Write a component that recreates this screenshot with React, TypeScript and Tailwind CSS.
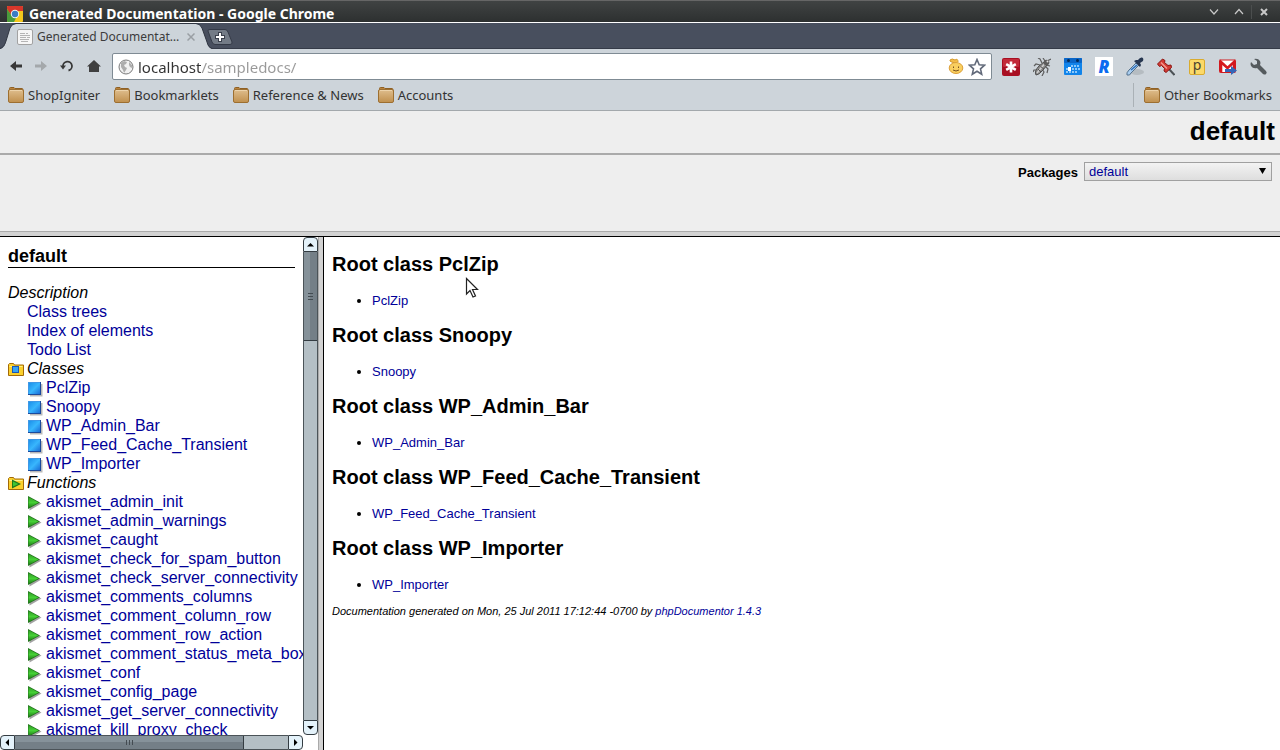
import React from 'react';

const classes = ['PclZip', 'Snoopy', 'WP_Admin_Bar', 'WP_Feed_Cache_Transient', 'WP_Importer'];

const functions = [
  'akismet_admin_init',
  'akismet_admin_warnings',
  'akismet_caught',
  'akismet_check_for_spam_button',
  'akismet_check_server_connectivity',
  'akismet_comments_columns',
  'akismet_comment_column_row',
  'akismet_comment_row_action',
  'akismet_comment_status_meta_box',
  'akismet_conf',
  'akismet_config_page',
  'akismet_get_server_connectivity',
  'akismet_kill_proxy_check',
];

function ChromeLogo() {
  return (
    <svg width="16" height="16" viewBox="0 0 16 16" className="shrink-0">
      <rect width="16" height="16" rx="1" fill="#f3c71c" />
      <path d="M0 1Q0 0 1 0H15Q16 0 16 1V5H8L4 9L0 3Z" fill="#d8372b" />
      <path d="M0 3L5 10L9 12L7 16H1Q0 16 0 15Z" fill="#4a9a3c" />
      <circle cx="8" cy="8" r="4.200" fill="#f4f4f4" />
      <circle cx="8" cy="8" r="3.200" fill="#3c7cc4" />
    </svg>
  );
}

function PageIcon() {
  return (
    <svg width="16" height="16" viewBox="0 0 16 16" className="shrink-0">
      <rect x="0.5" y="0.5" width="15" height="15" rx="1.5" fill="#f6f6f6" stroke="#a2a2a2" />
      <path d="M3 4.5H8M9 4.5H11M3 6.5H13M3 8.5H9M10 8.5H13M3 10.5H12M4 12.5H11" stroke="#b4b4b4" />
    </svg>
  );
}

function BookmarkFolder() {
  return (
    <svg width="16" height="16" viewBox="0 0 16 16" className="shrink-0">
      <defs>
        <linearGradient id="tan" x1="0" y1="0" x2="0" y2="1">
          <stop offset="0" stopColor="#dfbe8e" />
          <stop offset="1" stopColor="#c0904e" />
        </linearGradient>
      </defs>
      <path d="M1.5 4V1.5Q1.5 0.5 2.5 0.5H6L7 1.5H14Q15 1.5 15 3V5H1.5Z" fill="#b9823c" stroke="#8f6024" />
      <rect x="0.5" y="2.5" width="15" height="13" rx="1.5" fill="url(#tan)" stroke="#9d6f30" />
      <path d="M2 3.5H14" stroke="#ecd3ab" />
    </svg>
  );
}

function ClassSquare() {
  return (
    <svg width="16" height="16" viewBox="0 0 16 16" className="shrink-0">
      <defs>
        <linearGradient id="blue" x1="0" y1="0" x2="1" y2="1">
          <stop offset="0" stopColor="#1c90ea" />
          <stop offset="0.5" stopColor="#38b6fd" />
          <stop offset="1" stopColor="#1a6fd8" />
        </linearGradient>
      </defs>
      <path d="M3 3H15.5V15.5H3Z" fill="#8a8a8a" opacity="0.6" />
      <rect x="1" y="1" width="13" height="13" fill="#1b4a9c" />
      <rect x="1" y="1" width="12" height="12" fill="#3f98e6" />
      <rect x="2" y="2" width="11" height="11" fill="url(#blue)" />
    </svg>
  );
}

function FunctionTriangle() {
  return (
    <svg width="16" height="16" viewBox="0 0 16 16" className="shrink-0">
      <defs>
        <linearGradient id="green" x1="0" y1="0" x2="0" y2="1">
          <stop offset="0" stopColor="#2f9a26" />
          <stop offset="0.5" stopColor="#45d035" />
          <stop offset="1" stopColor="#1e7a18" />
        </linearGradient>
      </defs>
      <path d="M2.500 3L14.500 8.500L2.500 15.500Z" fill="#666" opacity="0.6" />
      <path d="M1 1L13 7.500L1 14Z" fill="#22701c" />
      <path d="M1.500 2L11.500 7.500L1.500 13Z" fill="url(#green)" />
    </svg>
  );
}

function TreeFolder({ kind }: { kind: 'class' | 'function' }) {
  return (
    <svg width="16" height="16" viewBox="0 0 16 16" className="shrink-0">
      <path d="M0.5 13.5V2.5L1.5 1.5H5.5L6.5 3H15.5V13.5Z" fill="#fbd02c" stroke="#a26a08" />
      <path d="M1.5 4.5H14.5" stroke="#fdf08a" />
      {kind === 'class' ? (
        <>
          <rect x="4" y="4" width="7" height="7" fill="#1c56b4" />
          <rect x="5" y="5" width="5" height="5" fill="#36a4f6" />
        </>
      ) : (
        <>
          <path d="M4 3.5L13 8L4 12.5Z" fill="#1f7a1c" />
          <path d="M5 5.5L10.5 8L5 10.5Z" fill="#42c433" />
        </>
      )}
    </svg>
  );
}

function Bookmark({ label }: { label: string }) {
  return (
    <a href="#" className="flex items-center gap-1 text-[13px] leading-4 whitespace-nowrap text-[#333]">
      <BookmarkFolder />
      {label}
    </a>
  );
}

function TitleBar() {
  return (
    <header className="flex h-[23px] shrink-0 items-center border-t border-b border-t-[#666] border-b-white bg-linear-to-b from-[#404343] to-[#2d3030] pt-1 pr-1 pl-[7px]">
      <ChromeLogo />
      <h1 className="ml-1.5 flex-1 truncate text-[14px] leading-5 font-bold text-white">Generated Documentation - Google Chrome</h1>
      <div className="flex h-5 items-center pb-1">
        <button aria-label="Minimize" className="flex w-[25px] justify-center">
          <svg width="10" height="10" viewBox="0 0 10 10" fill="none" stroke="#c8c8c8" strokeWidth="1.2"><path d="M1 2.5L5 7L9 2.5" /></svg>
        </button>
        <button aria-label="Maximize" className="flex w-[25px] justify-center">
          <svg width="10" height="10" viewBox="0 0 10 10" fill="none" stroke="#c8c8c8" strokeWidth="1.2"><path d="M1 7L5 2.5L9 7" /></svg>
        </button>
        <button aria-label="Close window" className="flex w-[25px] justify-center border-l border-[#4b4e4e] py-0.5">
          <svg width="10" height="10" viewBox="0 0 10 10" fill="none" stroke="#c8c8c8" strokeWidth="2"><path d="M2 2L8 8M8 2L2 8" /></svg>
        </button>
      </div>
    </header>
  );
}

function PageTab() {
  return (
    <div className="relative flex items-center pt-0.5">
      <PageIcon />
      <span className="ml-1 w-[146px] text-[12px] leading-4 whitespace-nowrap text-[#3c3c3c]">Generated Documentat…</span>
      <button aria-label="Close tab" className="ml-1">
        <svg width="8" height="8" viewBox="0 0 8 8" stroke="#9a9fa4" strokeWidth="1.5"><path d="M0.500 0.500L7.500 7.500M7.500 0.500L0.500 7.500" /></svg>
      </button>
    </div>
  );
}

function TabStrip() {
  return (
    <nav className="flex h-[26px] shrink-0 items-end border-b border-[#353b48] bg-[#484f5e]">
      <div className="relative flex h-[25px] w-[207px] items-center pl-[17px]">
        <svg className="absolute top-0 left-0" width="212" height="26" viewBox="0 0 212 26">
          <path d="M0 26C4 25 5 22 6 18L10 5Q12 1 16 1H196Q200 1 202 5L207 19C208 23 209 25 212 26Z" fill="#cdd4da" />
          <path d="M0 25.5C4 24 5 21 6 18L10 5Q12 0.5 16 0.5H196Q200 0.5 202 5L207 19C208 23 209 24 212 25.5" fill="none" stroke="#2f3541" />
        </svg>
        <PageTab />
      </div>
      <button aria-label="New tab" className="mb-[3px] flex">
        <svg width="26" height="16" viewBox="0 0 26 16">
          <path d="M1 2Q0.5 0.5 3 0.5H18Q20 0.5 21 3L25 13Q25.500 15.500 23 15.500H8Q6 15.500 5 13Z" fill="#737b86" stroke="#343a47" />
          <path d="M13 3V13M8 8H18" stroke="#3a404c" strokeWidth="4" />
          <path d="M13 4V12M9 8H17" stroke="#fff" strokeWidth="2" />
        </svg>
      </button>
    </nav>
  );
}

function Extensions() {
  return (
    <div className="flex items-center gap-[13px] pl-2.5">
      <button aria-label="LastPass">
        <svg width="18" height="18" viewBox="0 0 18 18">
          <rect width="18" height="18" rx="2" fill="#a80f22" />
          <rect x="1" y="1" width="16" height="8" rx="1" fill="#c22a39" />
          <path d="M9 3.500V14.500M4.200 6.200L13.800 11.800M13.800 6.200L4.200 11.800" stroke="#fff" strokeWidth="2.600" />
        </svg>
      </button>
      <button aria-label="Firebug">
        <svg width="18" height="18" viewBox="0 0 18 18" fill="none">
          <path d="M7 7L3 6L1 8M9 5L7 1L5 0M12 8L15 11L14 15M9 11L11 14L9 18M5 12L1 12L0 14M13 7L17 8M12 3L10 0M14 3L18 1" stroke="#5e5e5e" strokeWidth="1.200" />
          <path d="M3 17Q1 13 6 8L11 4L14 7L10 12Q6 17 3 17Z" fill="#8b8b8b" stroke="#4e4e4e" />
          <path d="M4 15L11 6.500" stroke="#d0d0d0" strokeWidth="1.500" />
          <path d="M5 11L8 14M7.500 8.500L11 11" stroke="#555" />
          <circle cx="13.500" cy="4.500" r="2.800" fill="#5c5c5c" />
          <circle cx="14.500" cy="3.500" r="1" fill="#ddd" />
        </svg>
      </button>
      <button aria-label="Calendar">
        <svg width="18" height="17" viewBox="0 0 18 17">
          <rect width="18" height="17" rx="1" fill="#1184ea" />
          <rect width="18" height="5" rx="1" fill="#0a66c8" />
          <circle cx="4.500" cy="2.500" r="1.500" fill="#052a54" />
          <circle cx="13.500" cy="2.500" r="1.500" fill="#052a54" />
          <path d="M7 8H16M2 11H16M2 14H13" stroke="#8cc8fa" strokeWidth="2" strokeDasharray="2 1" />
          <rect x="4" y="9" width="3" height="4" fill="#fff" />
        </svg>
      </button>
      <button aria-label="Rapportive" className="flex h-[19px] w-[18px] items-center justify-center bg-white font-['Open_Sans',sans-serif] text-[17px] leading-none font-extrabold text-[#0b6cf0] italic">R</button>
      <button aria-label="Eyedropper">
        <svg width="18" height="19" viewBox="0 0 18 19">
          <ellipse cx="11" cy="15" rx="7" ry="3" fill="#b5bcc1" />
          <path d="M10 6L3 13Q0 16 1 18Q4 19 5 16L13 8Z" fill="#a8cdf0" stroke="#54718c" />
          <path d="M11 8L5 13" stroke="#2f6fb8" strokeWidth="1.500" />
          <path d="M8 4L14 10L15 8L14 6L17 4Q18 1 16 0.500Q14 0 12 3L10 3Z" fill="#263650" />
        </svg>
      </button>
      <button aria-label="Pin">
        <svg width="18" height="18" viewBox="0 0 18 18">
          <path d="M11 10L17.500 17" stroke="#4c5256" strokeWidth="2" />
          <path d="M0.500 6L5.500 1L8 2.500L7.500 4.500L11 7.500L14 7L14.500 9.500L9 14.500L7 13L7.500 10.500L4.500 7.500L2.500 8.500Z" fill="#d23a33" stroke="#8c1612" />
          <path d="M4 4.500L6 6.500L10 10.500" stroke="#f59a90" strokeWidth="1.500" />
        </svg>
      </button>
      <button aria-label="Postponer" className="mx-px flex h-4 w-4 items-center justify-center rounded-xs border border-[#d9ab2e] bg-[#fcd968] pb-1 text-[14px] leading-none text-[#4c4330]">p</button>
      <button aria-label="Gmail">
        <svg width="18" height="17" viewBox="0 0 18 17">
          <rect x="0.500" y="2" width="16" height="12.500" rx="1" fill="#fff" stroke="#cf1c20" />
          <path d="M2 14.500V4L8.500 10L15 4V14.500" fill="none" stroke="#d5181e" strokeWidth="2.600" />
          <path d="M6 11H12V8L18 12.500L12 17V14H6Z" fill="#3566b8" />
        </svg>
      </button>
      <button aria-label="Settings">
        <svg width="18" height="18" viewBox="0 0 18 18">
          <path d="M1 4L4 7L7 6L7 3L4 1Q8 0 10 3Q11 5 10 7L16 13Q17.500 15 16 16Q15 17 13 16L7 10Q3 11 1 8Q0 6 1 4Z" fill="#555b5e" />
        </svg>
      </button>
    </div>
  );
}

function Toolbar() {
  return (
    <div className="flex h-[35px] shrink-0 items-center bg-[#cdd4da] pr-3 pl-2">
      <div className="flex w-[104px] items-center gap-[9px]">
        <button aria-label="Back"><svg width="16" height="16" viewBox="0 0 16 16"><path d="M2 7L8 2V5.500H14V8.500H8V12Z" fill="#383838" /></svg></button>
        <button aria-label="Forward"><svg width="16" height="16" viewBox="0 0 16 16"><path d="M14 7L8 2V5.500H2V8.500H8V12Z" fill="#a4a8ab" /></svg></button>
        <button aria-label="Reload" className="ml-px">
          <svg width="16" height="16" viewBox="0 0 16 16"><path d="M4 7.500A4.500 4.500 0 1 1 9.500 11.500" fill="none" stroke="#383838" strokeWidth="1.800" /><path d="M1 6.500H7L4 10.500Z" fill="#383838" /></svg>
        </button>
        <button aria-label="Home" className="ml-px">
          <svg width="16" height="16" viewBox="0 0 16 16"><path d="M9 1L2 7.500H4V13H14V7.500H16Z" fill="#404040" /></svg>
        </button>
      </div>
      <div className="flex h-[27px] min-w-0 flex-1 items-center rounded-xs border border-[#7f8b94] bg-white px-[5px]">
        <svg width="16" height="16" viewBox="0 0 16 16" className="shrink-0">
          <circle cx="8" cy="8" r="7" fill="#f1f1f1" stroke="#7b7b7b" />
          <path d="M3 4L6 2L9 3L8 5L6 6L7 8L9 9L8 11L6 14L5 11L3 8ZM11 3L14 6L14 9L12 8L11 6Z" fill="#adadad" />
        </svg>
        <input
          aria-label="Address"
          defaultValue="localhost/sampledocs/"
          className="ml-1 h-6 min-w-0 flex-1 bg-[linear-gradient(to_right,#333_63px,#999_63px)] bg-clip-text text-[15px] leading-6 text-transparent caret-black outline-none"
        />
        <button aria-label="Page greeting">
          <svg width="16" height="17" viewBox="0 0 16 17">
            <path d="M8 5Q1 4 2 2Q4 0 7 2Q10 0 10 4" fill="#f3bd48" stroke="#d59a2c" />
            <ellipse cx="8" cy="10" rx="6.800" ry="5.500" fill="#f9cf60" stroke="#dca03a" />
            <path d="M5.500 8.500V10M10.500 8.500V10M5 12Q8 14 11 12" stroke="#775020" fill="none" />
          </svg>
        </button>
        <button aria-label="Bookmark this page" className="ml-1">
          <svg width="18" height="18" viewBox="0 0 18 18"><path d="M9 1.500L11.200 6.700L16.500 7.200L12.500 10.800L13.700 16.200L9 13.300L4.300 16.200L5.500 10.800L1.500 7.200L6.800 6.700Z" fill="#fff" stroke="#626a7a" strokeWidth="1.600" /></svg>
        </button>
      </div>
      <Extensions />
    </div>
  );
}

function BookmarksBar() {
  return (
    <div className="flex h-[27px] shrink-0 items-center border-b border-[#a3a8ac] bg-[#cdd4da] pr-2 pb-1 pl-2">
      <div className="flex flex-1 gap-3.5">
        <Bookmark label="ShopIgniter" />
        <Bookmark label="Bookmarklets" />
        <Bookmark label="Reference & News" />
        <Bookmark label="Accounts" />
      </div>
      <div className="border-l border-[#aab1b6] py-1 pl-2.5">
        <Bookmark label="Other Bookmarks" />
      </div>
    </div>
  );
}

function DocsHeader() {
  return (
    <section className="flex h-[126px] shrink-0 flex-col border-b border-black bg-[#eee]">
      <h1 className="h-11 shrink-0 border-b-2 border-[#aaa] pt-1 pr-[5px] text-right text-[26px] leading-8 font-bold">default</h1>
      <div className="flex flex-1 items-start justify-end gap-1.5 pt-[7px] pr-2 text-[13px]">
        <label htmlFor="packages" className="leading-[22px] font-bold">Packages</label>
        <div className="relative">
          <select id="packages" className="h-[19px] w-[188px] appearance-none border border-[#a0a0a0] bg-linear-to-b from-[#f3f3f3] to-[#dedede] pt-px pl-1 leading-4 text-[#000099]">
            <option>default</option>
          </select>
          <svg className="pointer-events-none absolute top-1.5 right-1.5" width="7" height="6" viewBox="0 0 7 6"><path d="M0 0H7L3.500 6Z" /></svg>
        </div>
      </div>
      <div className="h-[5px] border-t border-[#aaa] bg-[#d2d2d2]" />
    </section>
  );
}

function TreeLink({ label, icon }: { label: string; icon: React.ReactNode }) {
  return (
    <li className="flex items-start gap-[3px] pl-[19px]">
      <span className="flex h-[19px] items-end">{icon}</span>
      <a href="#" className="text-[#000099]">{label}</a>
    </li>
  );
}

function TreeHeading({ label, kind }: { label: string; kind: 'class' | 'function' }) {
  return (
    <h3 className="flex items-start gap-[3px] italic">
      <span className="flex h-[19px] items-end"><TreeFolder kind={kind} /></span>
      {label}
    </h3>
  );
}

function ArrowButton({ label, d, className }: { label: string; d: string; className: string }) {
  return (
    <button aria-label={label} className={`flex h-[15px] w-[15px] shrink-0 items-center justify-center border border-[#343c42] bg-[#e4f2fa] ${className}`}>
      <svg width="7" height="7" viewBox="0 0 7 7"><path d={d} /></svg>
    </button>
  );
}

function Sidebar() {
  return (
    <aside className="flex w-[318px] shrink-0 flex-col">
      <div className="flex min-h-0 flex-1">
        <div className="min-w-0 flex-1 overflow-hidden px-2 pt-2 text-[16px] leading-[19px] whitespace-nowrap">
          <h2 className="mb-[15px] border-b border-black text-[18px] leading-[22px] font-bold">default</h2>
          <p className="italic">Description</p>
          <ul className="pl-[19px] text-[#000099]">
            <li><a href="#">Class trees</a></li>
            <li><a href="#">Index of elements</a></li>
            <li><a href="#">Todo List</a></li>
          </ul>
          <TreeHeading label="Classes" kind="class" />
          <ul>{classes.map((c) => <TreeLink key={c} label={c} icon={<ClassSquare />} />)}</ul>
          <TreeHeading label="Functions" kind="function" />
          <ul>{functions.map((f) => <TreeLink key={f} label={f} icon={<FunctionTriangle />} />)}</ul>
        </div>
        <div className="flex w-[15px] flex-col">
          <ArrowButton label="Scroll up" d="M0 5.500L3.500 2L7 5.500Z" className="rounded-t-sm" />
          <div className="flex-1 border-x border-[#4b5358] bg-[#b4bfc5]">
            <div className="flex h-[89px] items-center justify-center border-b border-[#343c42] bg-linear-to-r from-[#86929a] from-50% to-[#747f87] to-50%">
              <svg width="5" height="7" viewBox="0 0 5 7"><path d="M0 0.500H5M0 3.500H5M0 6.500H5" stroke="#444c52" /></svg>
            </div>
          </div>
          <ArrowButton label="Scroll down" d="M0 2L3.500 5.500L7 2Z" className="rounded-b-sm" />
        </div>
      </div>
      <div className="flex h-[15px] w-[303px] shrink-0">
        <ArrowButton label="Scroll left" d="M5 0V7L1.500 3.500Z" className="rounded-l-sm" />
        <div className="flex-1 border-y border-[#4b5358] bg-[#b4bfc5]">
          <div className="flex h-full w-[229px] items-center justify-center border-r border-[#343c42] bg-linear-to-b from-[#86929a] from-50% to-[#747f87] to-50%">
            <svg width="7" height="5" viewBox="0 0 7 5"><path d="M0.500 0V5M3.500 0V5M6.500 0V5" stroke="#444c52" /></svg>
          </div>
        </div>
        <ArrowButton label="Scroll right" d="M2 0V7L5.500 3.500Z" className="rounded-r-sm" />
      </div>
    </aside>
  );
}

function MainPane() {
  return (
    <main className="relative min-w-0 flex-1 overflow-hidden bg-white px-2 pt-[15px]">
      <div className="flex flex-col gap-0.5">
        {classes.map((c) => (
          <section key={c} className="h-[69px]">
            <h2 className="text-[20px] leading-6 font-bold">Root class {c}</h2>
            <ul className="list-disc pt-[17px] pl-10 text-[13px] leading-4">
              <li><a href="#" className="text-[#000099]">{c}</a></li>
            </ul>
          </section>
        ))}
      </div>
      <p className="text-[11px] leading-3 italic">
        Documentation generated on Mon, 25 Jul 2011 17:12:44 -0700 by <a href="#" className="text-[#000099]">phpDocumentor 1.4.3</a>
      </p>
      <svg className="absolute top-10 left-[141px]" width="14" height="22" viewBox="0 0 14 22">
        <path d="M1.500 1.500V17L5 13.500L8 20L10.500 19L7.500 12.500H12.500Z" fill="#fff" stroke="#222" strokeWidth="1.200" />
      </svg>
    </main>
  );
}

export default function App() {
  return (
    <div className="flex h-screen flex-col overflow-hidden bg-white font-['Liberation_Sans',Arial,sans-serif] text-black">
      <div className="shrink-0 font-['Noto_Sans',sans-serif]">
        <TitleBar />
        <TabStrip />
        <Toolbar />
        <BookmarksBar />
      </div>
      <DocsHeader />
      <div className="flex min-h-0 flex-1">
        <Sidebar />
        <div className="w-1.5 shrink-0 border-r border-l border-r-black border-l-[#aaa] bg-[#d2d2d2]" />
        <MainPane />
      </div>
    </div>
  );
}
